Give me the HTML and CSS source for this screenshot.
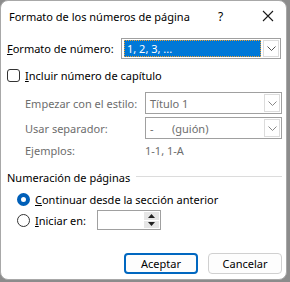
FILE: index.html
```html
<!DOCTYPE html>
<html lang="es">
<head>
  <meta charset="UTF-8" />
  <title>Formato de los números de página</title>
  <link rel="stylesheet" href="styles.css">
</head>
<body>
  <div class="dialog">
    <div class="titlebar">
      <span class="title">Formato de los números de página</span>
      <span class="help">?</span>
      <span class="close">
        <svg width="12" height="12" viewBox="0 0 12 12"><path d="M1 1 L11 11 M11 1 L1 11" stroke="#1a1a1a" stroke-width="1.1" fill="none"/></svg>
      </span>
    </div>

    <div class="row format-row">
      <label class="label"><u>F</u>ormato de número:</label>
      <div class="select main-select">
        <div class="select-value"><span class="focus">1, 2, 3, ...</span></div>
        <div class="select-btn"><svg width="9" height="5" viewBox="0 0 9 5"><path d="M0.5 0.5 L4.5 4.5 L8.5 0.5" stroke="#555" fill="none"/></svg></div>
      </div>
    </div>

    <div class="row check-row">
      <span class="checkbox"></span>
      <label class="label"><u>I</u>ncluir número de capítulo</label>
    </div>

    <div class="chapter">
      <span class="muted">Empezar con el estilo:</span>
      <div class="select sub-select">
        <div class="select-value muted">Título 1</div>
        <div class="select-btn"><svg width="9" height="5" viewBox="0 0 9 5"><path d="M0.5 0.5 L4.5 4.5 L8.5 0.5" stroke="#888" fill="none"/></svg></div>
      </div>
      <span class="muted">Usar separador:</span>
      <div class="select sub-select">
        <div class="select-value muted"><span class="dash">-</span>(guión)</div>
        <div class="select-btn"><svg width="9" height="5" viewBox="0 0 9 5"><path d="M0.5 0.5 L4.5 4.5 L8.5 0.5" stroke="#888" fill="none"/></svg></div>
      </div>
      <span class="muted">Ejemplos:</span>
      <span class="muted">1-1, 1-A</span>
    </div>

    <div class="group-title">
      <span>Numeración de páginas</span>
      <span class="rule"></span>
    </div>

    <div class="row radio-row first">
      <span class="radio checked"></span>
      <label class="label"><u>C</u>ontinuar desde la sección anterior</label>
    </div>
    <div class="row radio-row">
      <span class="radio"></span>
      <label class="label"><u>I</u>niciar en:</label>
      <div class="spinner">
        <div class="spin-field"></div>
        <div class="spin-btns">
          <div class="spin-btn"><svg width="7" height="4" viewBox="0 0 7 4"><path d="M0 4 L3.5 0 L7 4 Z" fill="#222"/></svg></div>
          <div class="spin-btn"><svg width="7" height="4" viewBox="0 0 7 4"><path d="M0 0 L3.5 4 L7 0 Z" fill="#222"/></svg></div>
        </div>
      </div>
    </div>

    <div class="buttons">
      <button class="btn primary">Aceptar</button>
      <button class="btn">Cancelar</button>
    </div>
  </div>
</body>
</html>
```

FILE: styles.css
```css
body {
  margin: 0;
  background-color: #8c8c8c;
  font-family: "Noto Sans", sans-serif;
  font-size: 11px;
  color: #000;
  white-space: nowrap;
}
.dialog {
  width: 285px;
  height: 278px;
  background-color: #fff;
  border: 1px solid #a8a8a8;
  border-radius: 8px;
  overflow: hidden;
}
.titlebar {
  display: flex;
  align-items: center;
  height: 30px;
  padding-left: 8px;
}
.title {
  flex: 1;
}
.help {
  width: 14px;
  font-size: 12px;
  margin-right: 30px;
}
.close {
  display: flex;
  width: 24px;
}
.row {
  display: flex;
  align-items: center;
  padding-left: 6px;
}
.label u {
  text-decoration-thickness: 1px;
}
.format-row {
  margin-top: 7px;
  height: 21px;
}
.format-row .label {
  width: 114px;
}
.select {
  display: flex;
  border: 1px solid #a0a0a0;
  background-color: #fff;
}
.main-select {
  width: 158px;
  height: 19px;
}
.main-select .select-value {
  flex: 1;
  margin: 1px 1px 1px 2px;
  background-color: #0078d7;
  color: #fff;
  display: flex;
  align-items: center;
}
.focus {
  display: flex;
  align-items: center;
  height: 15px;
  width: 100%;
  border: 1px dotted #f0a030;
  padding-left: 2px;
}
.select-btn {
  width: 14px;
  margin: 1px;
  border: 1px solid #dcdcdc;
  display: flex;
  align-items: center;
  justify-content: center;
}
.check-row {
  margin-top: 9px;
  height: 14px;
}
.checkbox {
  width: 11px;
  height: 11px;
  border: 1px solid #333;
  border-radius: 3px;
  margin-right: 5px;
}
.chapter {
  display: grid;
  grid-template-columns: 120px 137px;
  grid-template-rows: 22px 22px 16px;
  row-gap: 3px;
  align-items: center;
  padding-left: 24px;
  margin-top: 10px;
}
.muted {
  color: #6d6d6d;
}
.sub-select {
  height: 20px;
}
.sub-select .select-value {
  flex: 1;
  padding-left: 4px;
  display: flex;
  align-items: center;
}
.dash {
  width: 22px;
}
.group-title {
  display: flex;
  align-items: center;
  padding-left: 6px;
  margin-top: 11px;
  height: 16px;
}
.rule {
  flex: 1;
  height: 1px;
  background-color: #dcdcdc;
  margin: 0 4px 2px 6px;
}
.radio-row {
  padding-left: 16px;
  height: 18px;
}
.radio-row.first {
  margin-top: 5px;
  margin-bottom: 3px;
}
.radio {
  box-sizing: border-box;
  width: 13px;
  height: 13px;
  border: 1px solid #333;
  border-radius: 50%;
  margin-right: 5px;
}
.radio.checked {
  border: 4px solid #005fb8;
  background-color: #fff;
}
.radio-row .label {
  min-width: 62px;
}
.spinner {
  display: flex;
  width: 62px;
  height: 18px;
  border: 1px solid #a0a0a0;
}
.spin-field {
  flex: 1;
}
.spin-btns {
  display: flex;
  flex-direction: column;
  width: 15px;
  margin: 1px;
  gap: 1px;
}
.spin-btn {
  flex: 1;
  background-color: #e6e6e6;
  display: flex;
  align-items: center;
  justify-content: center;
}
.buttons {
  display: flex;
  justify-content: flex-end;
  gap: 10px;
  padding-right: 4px;
  margin-top: 24px;
}
.btn {
  width: 74px;
  height: 21px;
  font-family: "Noto Sans", sans-serif;
  font-size: 11px;
  background-color: #fdfdfd;
  border: 1px solid #d0d0d0;
  border-radius: 4px;
  padding: 0;
}
.btn.primary {
  border: 2px solid #0067c0;
}
```
